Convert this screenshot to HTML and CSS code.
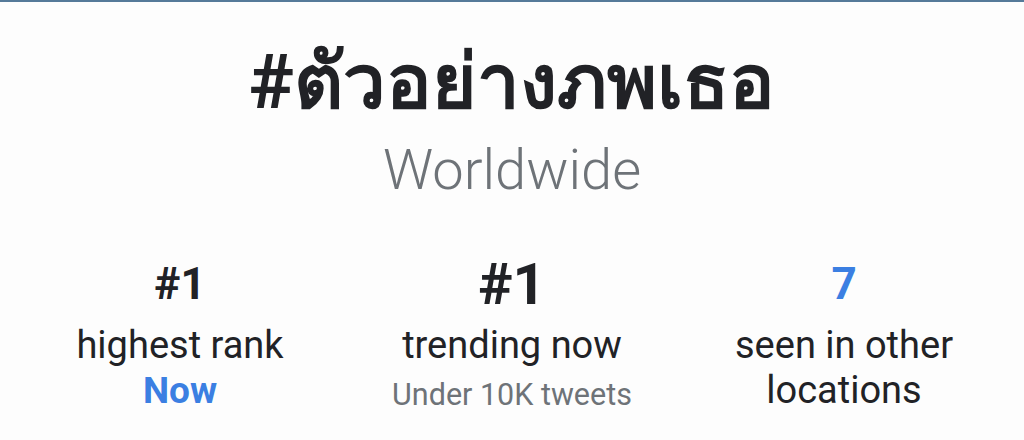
FILE: index.html
```html
<!DOCTYPE html>
<html lang="en">
<head>
    <meta charset="UTF-8">
    <meta name="viewport" content="width=device-width, initial-scale=1.0">
    <title>Trend</title>
    <link rel="stylesheet" href="styles.css">
</head>
<body>

    <header class="trend-head">
        <h1 class="trend-name">#ตัวอย่างภพเธอ</h1>
        <p class="trend-place">Worldwide</p>
    </header>

    <section class="stats">
        <div class="stat">
            <div class="stat-num">#1</div>
            <div class="stat-label">highest rank</div>
            <div class="stat-sub blue">Now</div>
        </div>
        <div class="stat">
            <div class="stat-num big">#1</div>
            <div class="stat-label">trending now</div>
            <div class="stat-sub gray">Under 10K tweets</div>
        </div>
        <div class="stat">
            <div class="stat-num blue">7</div>
            <div class="stat-label">seen in other<br>locations</div>
        </div>
    </section>

</body>
</html>
```
FILE: styles.css
```css
/* Reset */
* { margin: 0; padding: 0; box-sizing: border-box; }

body {
    font-family: Roboto, "Noto Sans", sans-serif;
    background: #fdfdfd;
    color: #212226;
    text-align: center;
    border-top: 2px solid #557a99;
    height: 440px;
    overflow: hidden;
}

/* Title */
.trend-head {
    padding-top: 38px;
}

.trend-name {
    font-size: 76px;
    font-weight: 700;
    line-height: 84px;
}

.trend-place {
    font-size: 56px;
    font-weight: 300;
    color: #6e7378;
    line-height: 64px;
    margin-top: 14px;
}

/* Stats */
.stats {
    display: grid;
    grid-template-columns: repeat(3, 1fr);
    padding: 0 14px;
    margin-top: 56px;
}

.stat-num {
    font-size: 44px;
    font-weight: 700;
    line-height: 52px;
}

.stat-num.big {
    font-size: 58px;
}

.stat-label {
    font-size: 38px;
    line-height: 45px;
    margin-top: 13px;
}

.stat-sub {
    font-size: 37px;
    line-height: 46px;
}

.blue { color: #3b7fe2; }

.stat-sub.blue { font-weight: 700; }

.stat-sub.gray {
    font-size: 30.5px;
    line-height: 44px;
    margin-top: 5px;
    color: #6e7378;
}
```
